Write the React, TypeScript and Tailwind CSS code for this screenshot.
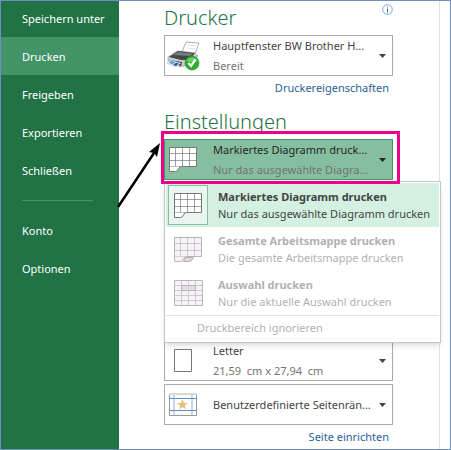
import { useState } from 'react';
import type { ReactNode } from 'react';
import clsx from 'clsx';

const navTop = ['Speichern unter', 'Drucken', 'Freigeben', 'Exportieren', 'Schließen'];
const navBottom = ['Konto', 'Optionen'];

function PrinterIcon() {
  return (
    <svg width="33" height="30" viewBox="0 0 33 30" className="-ml-[2px]" aria-hidden="true">
      <path d="M19 1 L32 2 L28 13 L15 11 Z" fill="#fdfdfd" stroke="#9a9a9a" strokeWidth="0.8" />
      <path d="M21 4 L29 5 M20 7 L28 8" stroke="#e2e2e2" strokeWidth="1" />
      <path d="M1 16 L10 10 L28 12 L31 15 L25 22 L14 26 L1 20 Z" fill="#c9ccce" stroke="#8d9194" strokeWidth="0.6" />
      <path d="M2 16 L11 10 L28 12 L22 19 L14 19 Z" fill="#45484b" />
      <path d="M6 14 L11 11 L26 12.500 L23 15 Z" fill="#777b7e" />
      <path d="M2 19 L15 21 L14 25 L2 21 Z" fill="#2b2e31" />
      <path d="M3 19 L14 22 L9 26 L0 22 Z" fill="#e9eef5" stroke="#a9adb3" strokeWidth="0.5" />
      <path d="M4 20 L8 21 L6 23 L2 22 Z" fill="#4b94d8" />
      <path d="M9 21.500 L12 22.500 L9 25 L6 24 Z" fill="#2560a8" />
      <circle cx="25" cy="22" r="7" fill="#2cae2f" stroke="#1c8a22" strokeWidth="0.6" />
      <path d="M19.500 20 A6 6 0 0 1 30.500 20 Q25 22 19.500 20 Z" fill="#6fd065" />
      <path d="M21.500 22 L24 25 L28.500 18.500" fill="none" stroke="#fff" strokeWidth="2.200" />
    </svg>
  );
}

function SheetIcon({ line, fill, tab }: { line: string; fill: string; tab?: string }) {
  return (
    <svg width="28" height="25" viewBox="0 0 28 25" fill="none" stroke={line} aria-hidden="true">
      <path d="M0.500 0.500 H27.500 V19.500 H12.500 Q10.500 19.500 9.500 22 Q8.500 24.500 6.500 24.500 H0.500 Z" fill={fill} />
      <path d="M6.500 1 V19 M13.500 1 V19 M20.500 1 V19 M1 6.500 H27 M1 13.500 H27" strokeOpacity="0.7" />
      <path d="M1 19.500 H12" strokeOpacity="0.5" />
      {tab ? <path d="M11.500 20.500 H19.500 Q18 24.500 15 24.500 H9.500 Z" fill={tab} /> : null}
    </svg>
  );
}

function SelectionIcon() {
  return (
    <svg width="29" height="26" viewBox="0 0 29 26" fill="none" stroke="#b9b5b9" aria-hidden="true">
      <path d="M0.500 0.500 H28.500 V25.500 H0.500 Z" fill="#f7f2f8" />
      <path d="M7.500 1 V25 M14.500 1 V25 M21.500 1 V25 M1 5.500 H28 M1 10.500 H28 M1 15.500 H28 M1 20.500 H28" stroke="#cfcacf" />
      <path d="M7.500 5.500 H21.500 V10.500 H7.500 Z" fill="#e0dde0" />
    </svg>
  );
}

function PaperIcon() {
  return (
    <svg width="28" height="23" viewBox="0 0 28 23" aria-hidden="true">
      <path d="M5.500 0.500 H22.500 V22.500 H5.500 Z" fill="#fff" stroke="#777" />
    </svg>
  );
}

function MarginsIcon() {
  return (
    <svg width="28" height="23" viewBox="0 0 28 23" fill="none" aria-hidden="true">
      <path d="M0.500 1 V22.500 H27.500 V1" stroke="#999" />
      <path d="M0 1 H28" stroke="#d9d9d9" strokeWidth="2" />
      <path d="M5 2 V22 M23 2 V22" stroke="#c3d6ec" strokeWidth="2" />
      <path d="M0 5.500 H28 M0 17.500 H28" stroke="#5b93c9" />
      <path d="M13.500 6 L15 10 H19 L15.800 12.500 L17 16.500 L13.500 14 L10 16.500 L11.200 12.500 L8 10 H12 Z" fill="#e8bd78" />
    </svg>
  );
}

function InfoIcon() {
  return (
    <svg width="11" height="11" viewBox="0 0 11 11" fill="none" aria-hidden="true">
      <circle cx="5.500" cy="5.500" r="4.800" stroke="#7da7dc" />
      <path d="M5.500 2.500 V3.500 M5.500 4.500 V8.500" stroke="#44689c" />
    </svg>
  );
}

interface PickerProps {
  icon: ReactNode;
  title: string;
  note?: string;
  active?: boolean;
  expanded?: boolean;
  onClick?: () => void;
}

function Picker({ icon, title, note, active, expanded, onClick }: PickerProps) {
  return (
    <button
      type="button"
      aria-haspopup="listbox"
      aria-expanded={expanded ?? false}
      onClick={onClick}
      className={clsx(
        'flex h-[41px] w-full items-center border text-left',
        active ? 'border-[#439467] bg-[#86bfa0]' : 'border-[#ababab] bg-white',
      )}
    >
      <span className="flex w-12 shrink-0 pl-1">{icon}</span>
      <span className="min-w-0 flex-1 leading-5 whitespace-pre">
        <span className={clsx('block', active ? 'text-[#262626]' : 'text-[#444]')}>{title}</span>
        {note ? <span className="block text-[#737373]">{note}</span> : null}
      </span>
      <svg width="7" height="4" viewBox="0 0 7 4" className="mx-[6px] shrink-0" aria-hidden="true">
        <path d="M0 0 H7 L3.500 4 Z" fill={active ? '#262626' : '#444'} />
      </svg>
    </button>
  );
}

const options = [
  {
    title: 'Markiertes Diagramm drucken',
    note: 'Nur das ausgewählte Diagramm drucken',
    icon: <SheetIcon line="#777" fill="#fff" />,
  },
  {
    title: 'Gesamte Arbeitsmappe drucken',
    note: 'Die gesamte Arbeitsmappe drucken',
    icon: <SheetIcon line="#b9b5b9" fill="#f7f2f8" tab="#dcd9dc" />,
    disabled: true,
  },
  {
    title: 'Auswahl drucken',
    note: 'Nur die aktuelle Auswahl drucken',
    icon: <SelectionIcon />,
    disabled: true,
  },
];

function PrintMenu() {
  return (
    <div className="absolute top-full left-0 z-10 mt-px w-[277px] border border-[#c6c6c6] bg-white p-px shadow-md">
      {options.map((o) => (
        <button
          key={o.title}
          type="button"
          disabled={o.disabled}
          className={clsx(
            'flex h-11 w-full items-center pl-[2px] text-left',
            o.disabled ? 'text-[#b1b1b1]' : 'bg-[#d3f0e0] text-[#444]',
          )}
        >
          <span
            className={clsx(
              'flex h-10 w-10 shrink-0 items-center justify-center border',
              o.disabled ? 'border-transparent' : 'border-[#86bfa0] bg-[#e9f5ee]',
            )}
          >
            {o.icon}
          </span>
          <span className="pl-[10px] leading-[17px] whitespace-nowrap">
            <span className="block font-bold">{o.title}</span>
            <span className="block">{o.note}</span>
          </span>
        </button>
      ))}
      <button
        type="button"
        disabled
        className="block h-[26px] w-full border-t border-[#e1e1e1] pl-[31px] text-left text-[#b1b1b1]"
      >
        Druckbereich ignorieren
      </button>
    </div>
  );
}

function NavItem({ label }: { label: string }) {
  return (
    <a
      href="#"
      aria-current={label === 'Drucken' ? 'page' : undefined}
      className={clsx(
        'flex h-[38px] items-center pt-[2px] pl-[22px] whitespace-nowrap text-white',
        label === 'Drucken' && 'bg-[#439467]',
      )}
    >
      {label}
    </a>
  );
}

export default function App() {
  const [open, setOpen] = useState(true);

  return (
    <div className="relative flex min-h-screen overflow-hidden bg-white font-['Noto_Sans','Open_Sans',sans-serif] text-[11px] outline outline-1 -outline-offset-1 outline-[#6f8fc0]">
      <nav className="-mt-px w-[119px] shrink-0 bg-[#217346]">
        {navTop.map((label) => (
          <NavItem key={label} label={label} />
        ))}
        <hr className="mx-[22px] mt-[11px] mb-[10px] w-[71px] border-[#439467]" />
        {navBottom.map((label) => (
          <NavItem key={label} label={label} />
        ))}
      </nav>

      <main className="mr-[11px] min-w-0 flex-1 border-r border-[#e1e1e1] pr-[46px] pl-[45px]">
        <div className="flex items-start justify-between pt-1">
          <h1 className="text-[20px] leading-7 font-light text-[#217346]">Drucker</h1>
          <button type="button" aria-label="Info">
            <InfoIcon />
          </button>
        </div>
        <section className="pt-[3px]">
          <Picker icon={<PrinterIcon />} title="Hauptfenster BW Brother H..." note="Bereit" />
          <div className="pt-[2px] pr-1 text-right leading-5">
            <a href="#" className="text-[#2a6099]">
              Druckereigenschaften
            </a>
          </div>
        </section>

        <h2 className="pt-[10px] text-[20px] leading-7 font-light text-[#217346]">Einstellungen</h2>
        <div className="relative mt-[3px]">
          <Picker
            icon={<SheetIcon line="#777" fill="#fff" />}
            title="Markiertes Diagramm druck..."
            note="Nur das ausgewählte Diagra..."
            active
            expanded={open}
            onClick={() => setOpen(!open)}
          />
          {open ? <PrintMenu /> : null}
          {/* callout frame and its arrow */}
          <div className="pointer-events-none absolute -top-2 -right-[7px] -bottom-1 -left-[3px] z-20 border-[3px] border-[#ec008c]" />
          <svg
            width="46"
            height="70"
            viewBox="0 0 46 70"
            className="pointer-events-none absolute top-0 -left-12 z-20"
            aria-hidden="true"
          >
            <path d="M2 68 L38 14" stroke="#000" strokeWidth="2.500" />
            <path d="M44 4 L41 18 L38 14 L33 13 Z" fill="#000" />
          </svg>
        </div>

        <section className="flex flex-col gap-[3px] pt-[160px]">
          <Picker icon={<PaperIcon />} title="Letter" note="21,59  cm x 27,94  cm" />
          <Picker icon={<MarginsIcon />} title="Benutzerdefinierte Seitenrän..." />
        </section>
        <div className="pt-[2px] pr-1 text-right leading-5">
          <a href="#" className="text-[#2a6099]">
            Seite einrichten
          </a>
        </div>
      </main>
    </div>
  );
}
